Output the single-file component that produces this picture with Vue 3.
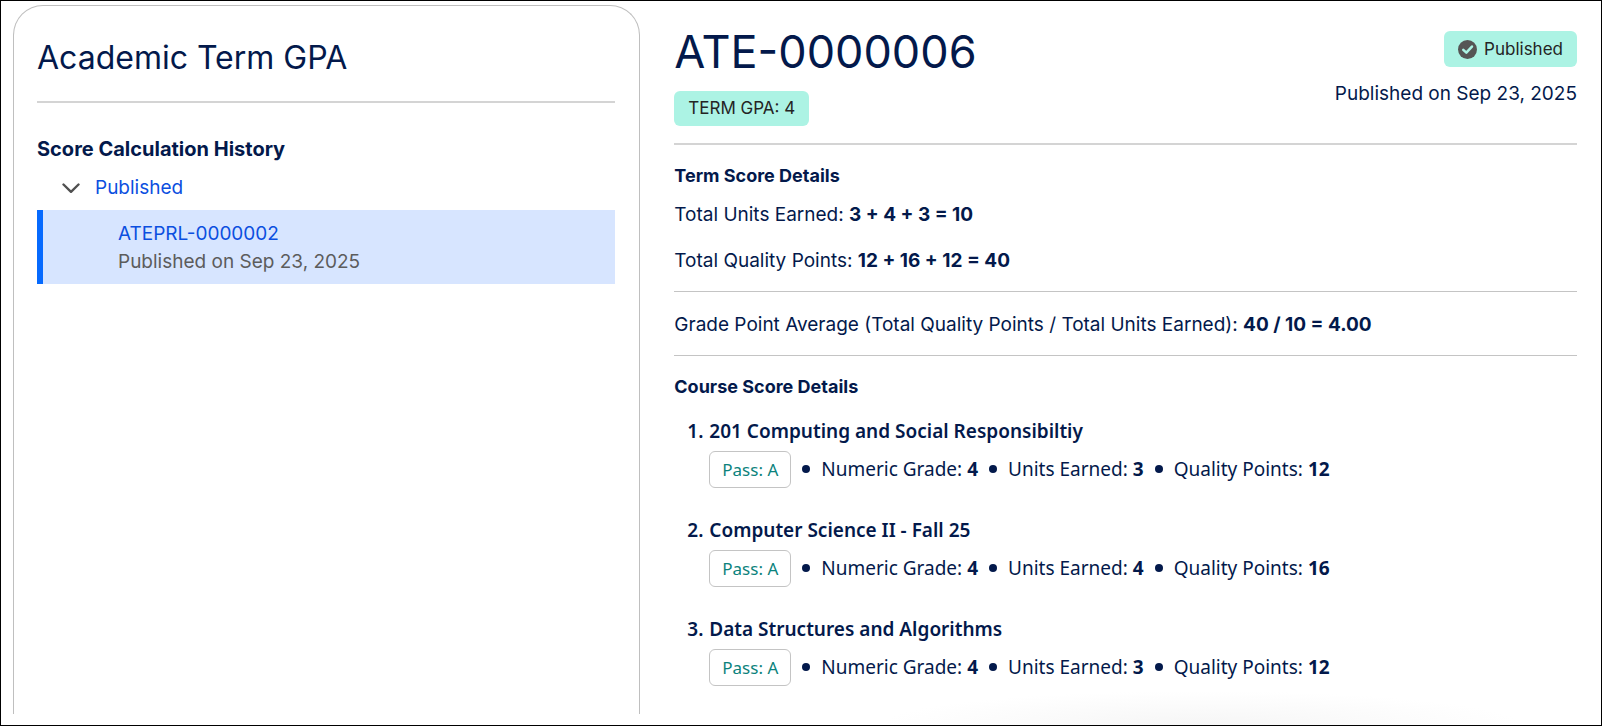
<script setup>
import { ref } from 'vue'

const open = ref(true)

const courses = [
  { name: '201 Computing and Social Responsibiltiy', result: 'Pass: A', grade: 4, units: 3, points: 12 },
  { name: 'Computer Science II - Fall 25', result: 'Pass: A', grade: 4, units: 4, points: 16 },
  { name: 'Data Structures and Algorithms', result: 'Pass: A', grade: 4, units: 3, points: 12 }
]
</script>

<template>
  <main class="page">
    <aside class="panel">
      <h2 class="panel-title">Academic Term GPA</h2>
      <h3 class="history-title">Score Calculation History</h3>
      <button class="toggle" type="button" :aria-expanded="open" @click="open = !open">
        <svg class="chevron" viewBox="0 0 18 18" aria-hidden="true">
          <path d="M1.5 5.5 9 12.8 16.5 5.5" fill="none" stroke="#505050" stroke-width="2.4" stroke-linecap="round" stroke-linejoin="round" />
        </svg>
        <span>Published</span>
      </button>
      <div v-if="open" class="entry">
        <a class="entry-link" href="#">ATEPRL-0000002</a>
        <span class="entry-date">Published on Sep 23, 2025</span>
      </div>
    </aside>

    <section class="detail">
      <header class="head">
        <div class="head-main">
          <h1 class="record">ATE-0000006</h1>
          <span class="badge">TERM GPA: 4</span>
        </div>
        <div class="head-side">
          <span class="badge status">
            <svg class="check" viewBox="0 0 18 18" aria-hidden="true">
              <circle cx="9" cy="9" r="9" fill="#555" />
              <path d="M5 9.300 7.900 12 13.200 6.200" fill="none" stroke="#acf3e4" stroke-width="2.400" stroke-linecap="round" stroke-linejoin="round" />
            </svg>
            <span>Published</span>
          </span>
          <span class="date">Published on Sep 23, 2025</span>
        </div>
      </header>

      <div class="block totals">
        <h2 class="section-title">Term Score Details</h2>
        <p class="line">Total Units Earned: <strong>3 + 4 + 3 = 10</strong></p>
        <p class="line">Total Quality Points: <strong>12 + 16 + 12 = 40</strong></p>
      </div>

      <div class="block average">
        <p class="line">Grade Point Average (Total Quality Points / Total Units Earned): <strong>40 / 10 = 4.00</strong></p>
      </div>

      <div class="block">
        <h2 class="section-title">Course Score Details</h2>
        <ol class="courses">
          <li v-for="(course, i) in courses" :key="course.name" class="course">
            <span class="number">{{ i + 1 }}.</span>
            <h3 class="course-name">{{ course.name }}</h3>
            <div class="facts">
              <span class="result">{{ course.result }}</span>
              <span class="fact">Numeric Grade: <strong>{{ course.grade }}</strong></span>
              <span class="fact">Units Earned: <strong>{{ course.units }}</strong></span>
              <span class="fact">Quality Points: <strong>{{ course.points }}</strong></span>
            </div>
          </li>
        </ol>
      </div>
    </section>
  </main>
</template>

<style>
body {
  margin: 0;
  background: #fff;
}
</style>

<style scoped>
.page {
  box-sizing: border-box;
  min-height: 100vh;
  padding: 4px 24px 0 12px;
  border: 1px solid #000;
  display: grid;
  grid-template-columns: 41fr 59fr;
  column-gap: 34px;
  background: radial-gradient(ellipse 320px 34px at 75% 100%, #f6f6f6, #fff) no-repeat;
  color: #03194b;
  font-family: Inter, "Liberation Sans", sans-serif;
  font-size: 19px;
  line-height: 28px;
}

h1,
h2,
h3,
p,
ol {
  margin: 0;
  padding: 0;
}

strong {
  font-weight: 700;
}

.panel {
  margin-bottom: 11px;
  padding: 30px 24px 0 23px;
  border: 1px solid #bfbfbf;
  border-bottom: 0;
  border-radius: 30px 30px 0 0;
}

.panel-title {
  padding-bottom: 21px;
  border-bottom: 2px solid #d4d4d4;
  font-size: 32px;
  font-weight: 400;
  line-height: 44px;
}

.history-title {
  margin-top: 32px;
  font-size: 20px;
  font-weight: 700;
  line-height: 28px;
}

.toggle {
  display: flex;
  align-items: center;
  gap: 15px;
  margin: 11px 0 8px;
  padding: 0 0 0 25px;
  border: 0;
  background: none;
  color: #0b4fe0;
  font: inherit;
  cursor: pointer;
}

.chevron {
  width: 18px;
  height: 18px;
}

.entry {
  display: flex;
  flex-direction: column;
  align-items: flex-start;
  padding: 10px 0 8px 75px;
  border-left: 6px solid #066afe;
  background: #d7e5ff;
}

.entry-link {
  color: #0b4fe0;
  text-decoration: none;
}

.entry-date {
  color: #5c5c5c;
}

.head {
  display: flex;
  justify-content: space-between;
  padding: 20px 0 17px;
  border-bottom: 2px solid #d4d4d4;
}

.head-main,
.head-side {
  display: flex;
  flex-direction: column;
  align-items: flex-start;
}

.head-side {
  align-items: flex-end;
  gap: 13px;
  padding-top: 6px;
}

.record {
  margin-bottom: 12px;
  font-size: 45px;
  font-weight: 400;
  line-height: 54px;
}

.badge {
  display: flex;
  align-items: center;
  gap: 7px;
  padding: 4px 14px;
  border-radius: 6px;
  background: #acf3e4;
  color: #242424;
  font-size: 17px;
  line-height: 27px;
}

.status {
  line-height: 28px;
}

.check {
  width: 19px;
  height: 19px;
}

.block {
  padding-top: 17px;
}

.totals,
.average {
  border-bottom: 1px solid #c4c4c4;
}

.totals {
  padding-bottom: 16px;
}

.average {
  padding: 19px 0 16px;
}

.section-title {
  margin-bottom: 11px;
  font-size: 18px;
  font-weight: 700;
  line-height: 28px;
}

.totals .line + .line {
  margin-top: 18px;
}

.courses {
  display: grid;
  gap: 28px;
  padding: 5px 0 10px 13px;
  list-style: none;
  font-family: "Noto Sans", sans-serif;
}

.course {
  display: grid;
  grid-template-columns: 22px 1fr;
  row-gap: 6px;
}

.number,
.course-name {
  font-size: 19px;
  font-weight: 600;
  line-height: 28px;
}

.facts {
  grid-column: 2;
  display: flex;
}

.result {
  padding: 4px 12px;
  border: 1px solid #c4c4c4;
  border-radius: 6px;
  color: #0b827c;
  font-size: 17px;
  line-height: 27px;
}

.fact {
  display: flex;
  align-items: center;
  gap: 5px;
  padding-bottom: 2px;
}

.fact::before {
  content: "";
  width: 8px;
  height: 8px;
  margin: 0 6px 0 11px;
  border-radius: 50%;
  background: #03194b;
}
</style>
